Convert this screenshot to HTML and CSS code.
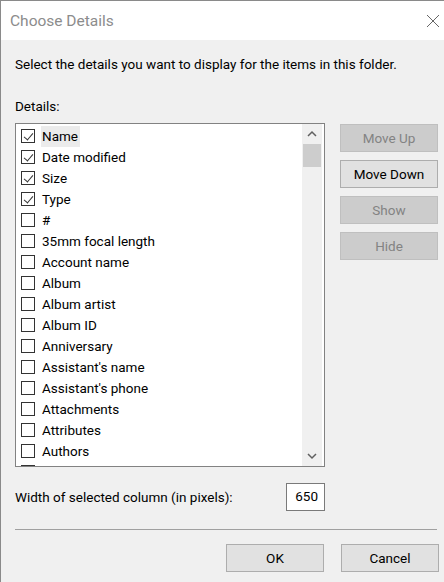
FILE: index.html
```html
<!DOCTYPE html>
<html>
<head>
<meta charset="utf-8">
<link rel="stylesheet" href="styles.css">
</head>
<body>
<div class="window">
  <div class="titlebar">
    <span class="title">Choose Details</span>
    <svg class="close" width="14" height="14" viewBox="0 0 14 14"><path d="M1 1L13 13M13 1L1 13" stroke="#666" stroke-width="1" fill="none"/></svg>
  </div>
  <div class="content">
    <p class="desc">Select the details you want to display for the items in this folder.</p>
    <p class="label">Details:</p>
    <div class="main">
      <div class="listbox">
        <ul class="items">
          <li><span class="cb checked"></span><span class="txt focus">Name</span></li>
          <li><span class="cb checked"></span><span class="txt">Date modified</span></li>
          <li><span class="cb checked"></span><span class="txt">Size</span></li>
          <li><span class="cb checked"></span><span class="txt">Type</span></li>
          <li><span class="cb"></span><span class="txt">#</span></li>
          <li><span class="cb"></span><span class="txt">35mm focal length</span></li>
          <li><span class="cb"></span><span class="txt">Account name</span></li>
          <li><span class="cb"></span><span class="txt">Album</span></li>
          <li><span class="cb"></span><span class="txt">Album artist</span></li>
          <li><span class="cb"></span><span class="txt">Album ID</span></li>
          <li><span class="cb"></span><span class="txt">Anniversary</span></li>
          <li><span class="cb"></span><span class="txt">Assistant's name</span></li>
          <li><span class="cb"></span><span class="txt">Assistant's phone</span></li>
          <li><span class="cb"></span><span class="txt">Attachments</span></li>
          <li><span class="cb"></span><span class="txt">Attributes</span></li>
          <li><span class="cb"></span><span class="txt">Authors</span></li>
          <li><span class="cb"></span></li>
        </ul>
        <div class="scrollbar">
          <svg class="arrow" width="20" height="20" viewBox="0 0 20 20"><path d="M6 12L10 8L14 12" stroke="#606060" stroke-width="1.5" fill="none"/></svg>
          <div class="thumb"></div>
          <div class="track"></div>
          <svg class="arrow" width="20" height="20" viewBox="0 0 20 20"><path d="M6 8L10 12L14 8" stroke="#606060" stroke-width="1.5" fill="none"/></svg>
        </div>
      </div>
      <div class="side">
        <button class="btn disabled">Move Up</button>
        <button class="btn">Move Down</button>
        <button class="btn disabled">Show</button>
        <button class="btn disabled">Hide</button>
      </div>
    </div>
    <div class="widthrow">
      <span>Width of selected column (in pixels):</span>
      <div class="input">650</div>
    </div>
    <div class="sep"></div>
    <div class="footer">
      <button class="btn big">OK</button>
      <button class="btn big">Cancel</button>
    </div>
  </div>
</div>
</body>
</html>
```
FILE: styles.css
```css
html, body {
  margin: 0;
  padding: 0;
  background: #f0f0f0;
}
body {
  font-family: Roboto, "Open Sans", sans-serif;
  font-size: 13.5px;
  color: #000;
  overflow: hidden;
}
.window {
  width: 444px;
  height: 582px;
  box-sizing: border-box;
  border-top: 1px solid #8a8a8a;
  border-left: 1px solid #8a8a8a;
  background: #f0f0f0;
}
.titlebar {
  height: 39px;
  background: #fff;
  display: flex;
  align-items: center;
  justify-content: space-between;
  padding: 0 4px 0 9px;
}
.title {
  color: #8c8c8c;
  font-size: 15.5px;
}
.content {
  padding: 0 5px 0 14px;
}
.desc {
  margin: 0;
  padding-top: 14px;
  line-height: 20px;
  height: 20px;
}
.label {
  margin: 0;
  padding-top: 22px;
  line-height: 20px;
  height: 20px;
}
.main {
  display: flex;
  gap: 15px;
  margin-top: 7px;
}
.listbox {
  width: 310px;
  height: 344px;
  box-sizing: border-box;
  border: 1px solid #828282;
  background: #fff;
  display: flex;
  overflow: hidden;
}
.items {
  list-style: none;
  margin: 0;
  padding: 1.5px 0 0 5px;
  flex: 1;
  overflow: hidden;
}
.items li {
  height: 21px;
  display: flex;
  align-items: center;
}
.cb {
  width: 14px;
  height: 14px;
  box-sizing: border-box;
  border: 1px solid #333;
  background: #fff;
  margin-right: 6px;
  position: relative;
  flex: none;
}
.cb.checked::after {
  content: "";
  position: absolute;
  left: 3.5px;
  top: 0.5px;
  width: 4px;
  height: 8px;
  border-right: 1px solid #333;
  border-bottom: 1px solid #333;
  transform: rotate(40deg);
}
.txt {
  line-height: 21px;
  padding: 0 2px 0 1px;
}
.txt.focus {
  background: #ebebeb;
}
.scrollbar {
  width: 20px;
  margin-right: 2px;
  background: #f0f0f0;
  display: flex;
  flex-direction: column;
}
.arrow {
  display: block;
  flex: none;
}
.thumb {
  height: 23px;
  margin: 0 1px;
  background: #cdcdcd;
}
.track {
  flex: 1;
}
.side {
  display: flex;
  flex-direction: column;
  gap: 8px;
  margin-top: 1px;
}
.btn {
  width: 98px;
  height: 28px;
  box-sizing: border-box;
  font-family: inherit;
  font-size: 13.5px;
  color: #000;
  background: #e1e1e1;
  border: 1px solid #adadad;
  padding: 0;
}
.btn.disabled {
  background: #cccccc;
  border-color: #bfbfbf;
  color: #838383;
}
.widthrow {
  display: flex;
  align-items: center;
  justify-content: space-between;
  width: 310px;
  margin-top: 13px;
  height: 34px;
}
.input {
  width: 39px;
  height: 28px;
  box-sizing: border-box;
  border: 1px solid #7a7a7a;
  background: #fff;
  text-align: right;
  padding-right: 6px;
  line-height: 24px;
}
.sep {
  height: 1px;
  background: #a0a0a0;
  width: 422px;
  margin-top: 15px;
}
.footer {
  display: flex;
  justify-content: flex-end;
  gap: 17px;
  margin-top: 14px;
}
```
